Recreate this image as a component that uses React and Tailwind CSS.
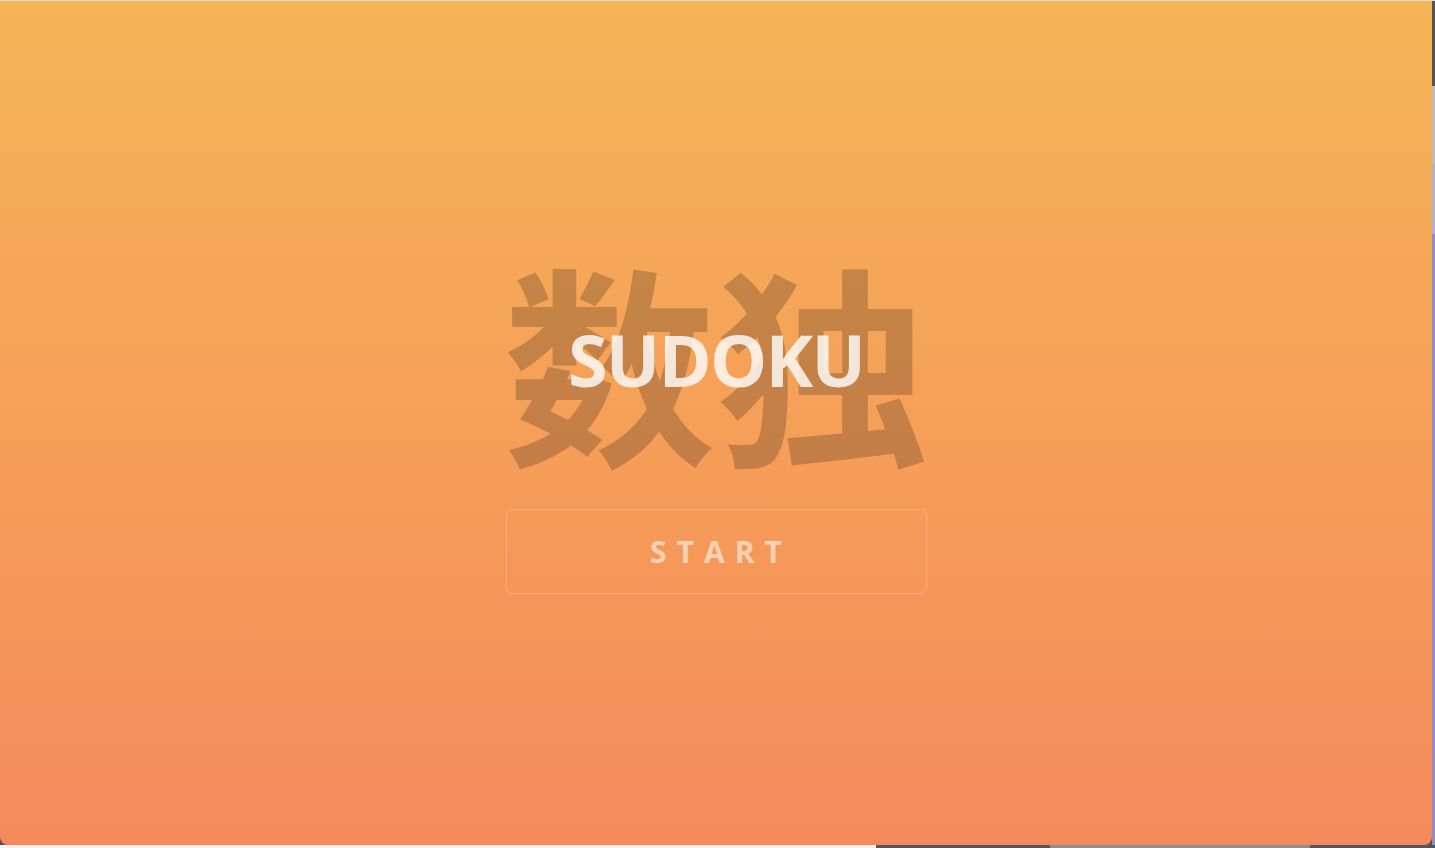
import React from "react";

// Sudoku splash screen
const App = () => {
  return (
    <div className="w-[1435px] h-[848px] flex flex-col bg-[#4d5157] overflow-hidden">
      <div className="h-px bg-[#dcdcdc] shrink-0" />
      <div className="flex flex-1">
        <div
          className="flex-1 flex flex-col items-center rounded-b-lg bg-gradient-to-b from-[#f5b455] to-[#f48a5b]"
          style={{ fontFamily: '"Open Sans", "Noto Sans", sans-serif' }}
        >
          <div className="relative mt-[250px] h-[213px] flex items-center justify-center">
            <span
              className="text-[213px] leading-none font-bold text-black/20 select-none"
              style={{ fontFamily: '"Noto Sans CJK SC", sans-serif' }}
            >
              数独
            </span>
            <h1 className="absolute inset-0 pt-[3px] flex items-center justify-center text-[72px] font-bold text-white/80 tracking-tight">
              SUDOKU
            </h1>
          </div>
          <button className="mt-[45px] w-[421px] h-[85px] rounded-md border border-white/20 text-[30px] font-bold tracking-[10px] pl-[10px] text-white/55">
            START
          </button>
        </div>
        <div className="w-[3px] flex flex-col">
          <div className="h-[85px] bg-[#50555c]" />
          <div className="h-[78px] bg-[#b9bcc2]" />
          <div className="h-[70px] bg-[#aab4cc]" />
          <div className="flex-1 bg-[#8e8fc4]" />
        </div>
      </div>
      <div className="h-[3px] flex shrink-0">
        <div className="w-[876px] bg-[#f2f2f2]" />
        <div className="w-[174px] bg-[#53575d]" />
        <div className="w-[260px] bg-[#8c8f94]" />
        <div className="flex-1 bg-[#53575d]" />
      </div>
    </div>
  );
};

export default App;
